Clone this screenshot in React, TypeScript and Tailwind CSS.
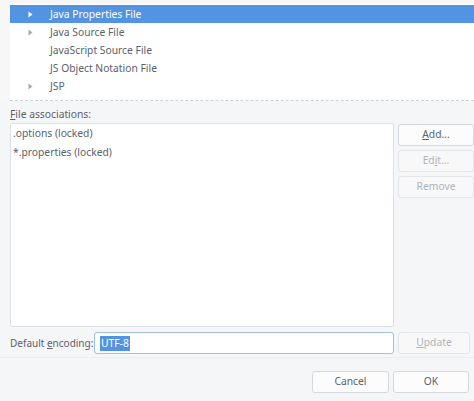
import React from "react";

const font = { fontFamily: '"Noto Sans", "Open Sans", sans-serif' };

function Arrow({ white }: { white?: boolean }) {
  return (
    <svg width="5" height="7" viewBox="0 0 5 7" className="shrink-0">
      <path d="M0.5 0.5 L4.5 3.5 L0.5 6.5 Z" fill={white ? "#ffffff" : "#a6a9ae"} />
    </svg>
  );
}

const rows = [
  { label: "Java Properties File", arrow: true, selected: true },
  { label: "Java Source File", arrow: true },
  { label: "JavaScript Source File", arrow: false },
  { label: "JS Object Notation File", arrow: false },
  { label: "JSP", arrow: true },
];

function SideButton({ children, disabled }: { children: React.ReactNode; disabled?: boolean }) {
  return (
    <button
      className={
        "h-[22px] w-[76px] rounded-[3px] border text-[10.3px] " +
        (disabled
          ? "border-[#e2e5ea] bg-[#f8f8f9] text-[#b0b3b8]"
          : "border-[#d5d9df] bg-[#fcfcfd] text-[#5c616c]")
      }
    >
      {children}
    </button>
  );
}

export default function App() {
  return (
    <div style={font} className="flex h-[401px] w-[474px] flex-col overflow-hidden bg-[#f5f6f7] text-[10.3px] text-[#5c616c]">
      <div className="bg-[#f7f7f8] pl-[10px] pt-[4px]">
        <div className="h-[97px] border-b border-dashed border-[#cdd1d6] bg-white pt-px">
          {rows.map((r) => (
            <div
              key={r.label}
              className={
                "flex h-[18px] items-center pt-px " +
                (r.selected ? "bg-[#5294e2] text-white" : "")
              }
            >
              <div className="flex w-[40px] justify-center pl-[1px]">
                {r.arrow && <Arrow white={r.selected} />}
              </div>
              <span>{r.label}</span>
            </div>
          ))}
        </div>
      </div>

      <div className="flex flex-col pl-[10px] pt-[6px]">
        <div className="h-[15px] whitespace-nowrap leading-[15px]">
          <span className="underline">F</span>ile associations:
        </div>
        <div className="mt-[1px] flex gap-[4px]">
          <div className="h-[204px] w-[384px] shrink-0 rounded-[2px] border border-[#dcdfe3] bg-white px-[2px]">
            <div className="h-[19px] leading-[19px]">.options (locked)</div>
            <div className="h-[19px] leading-[19px]">*.properties (locked)</div>
          </div>
          <div className="flex shrink-0 flex-col gap-[4px] pt-[1px]">
            <SideButton>
              <span className="underline">A</span>dd...
            </SideButton>
            <SideButton disabled>
              Ed<span className="underline">i</span>t...
            </SideButton>
            <SideButton disabled>Remove</SideButton>
          </div>
        </div>
        <div className="mt-[5px] flex items-center">
          <span className="w-[84px] shrink-0 whitespace-nowrap text-[10px]">
            Default <span className="underline">e</span>ncoding:
          </span>
          <div className="flex h-[22px] w-[300px] shrink-0 items-center rounded-[3px] border border-[#9dbfe9] bg-white px-[5px]">
            <span className="bg-[#5294e2] px-px leading-[15px] text-white">UTF-8</span>
          </div>
          <button className="ml-[4px] h-[22px] w-[72px] shrink-0 rounded-[3px] border border-[#e2e5ea] bg-[#f8f8f9] text-[10.3px] text-[#b0b3b8]">
            <span className="underline">U</span>pdate
          </button>
        </div>
      </div>

      <div className="mt-[3px] flex flex-1 items-start justify-end gap-[4px] border-t border-[#ebedf0] bg-[#f5f6f7] pr-[5px] pt-[13px]">
        <button className="h-[22px] w-[77px] rounded-[3px] border border-[#d5d9df] bg-[#fcfcfd] text-[10.3px] text-[#5c616c]">
          Cancel
        </button>
        <button className="h-[22px] w-[76px] rounded-[3px] border border-[#d5d9df] bg-[#fcfcfd] text-[10.3px] text-[#5c616c]">
          OK
        </button>
      </div>
    </div>
  );
}
